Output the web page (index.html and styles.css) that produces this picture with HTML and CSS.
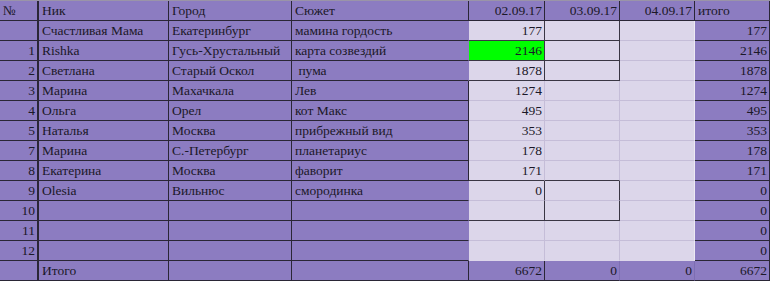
FILE: index.html
```html
<!DOCTYPE html>
<html lang="ru">
<head>
<meta charset="utf-8">
<title>Таблица</title>
<link rel="stylesheet" href="styles.css">
</head>
<body>
<div class="sheet">
  <!-- header -->
  <div class="c">№</div><div class="c">Ник</div><div class="c">Город</div><div class="c">Сюжет</div>
  <div class="c r">02.09.17</div><div class="c r">03.09.17</div><div class="c r">04.09.17</div><div class="c">итого</div>

  <div class="c r"></div><div class="c">Счастливая Мама</div><div class="c">Екатеринбург</div><div class="c sl">мамина гордость</div>
  <div class="c l r dr db">177</div><div class="c l dr db"></div><div class="c l le"></div><div class="c r">177</div>

  <div class="c r">1</div><div class="c">Rishka</div><div class="c">Гусь-Хрустальный</div><div class="c sl">карта созвездий</div>
  <div class="c g r dr db">2146</div><div class="c l dr db"></div><div class="c l le"></div><div class="c r">2146</div>

  <div class="c r">2</div><div class="c">Светлана</div><div class="c">Старый Оскол</div><div class="c sl pre"> пума</div>
  <div class="c l r dr db">1878</div><div class="c l dr db"></div><div class="c l le"></div><div class="c r">1878</div>

  <div class="c r">3</div><div class="c">Марина</div><div class="c">Махачкала</div><div class="c">Лев</div>
  <div class="c l r">1274</div><div class="c l"></div><div class="c l le"></div><div class="c r">1274</div>

  <div class="c r">4</div><div class="c">Ольга</div><div class="c">Орел</div><div class="c">кот Макс</div>
  <div class="c l r">495</div><div class="c l"></div><div class="c l le"></div><div class="c r">495</div>

  <div class="c r">5</div><div class="c">Наталья</div><div class="c">Москва</div><div class="c">прибрежный вид</div>
  <div class="c l r">353</div><div class="c l"></div><div class="c l le"></div><div class="c r">353</div>

  <div class="c r">7</div><div class="c">Марина</div><div class="c">С.-Петербург</div><div class="c">планетариус</div>
  <div class="c l r">178</div><div class="c l"></div><div class="c l le"></div><div class="c r">178</div>

  <div class="c r">8</div><div class="c">Екатерина</div><div class="c">Москва</div><div class="c">фаворит</div>
  <div class="c l r db">171</div><div class="c l db"></div><div class="c l le"></div><div class="c r">171</div>

  <div class="c r">9</div><div class="c">Olesia</div><div class="c">Вильнюс</div><div class="c sl">смородинка</div>
  <div class="c l r dr">0</div><div class="c l dr"></div><div class="c l le"></div><div class="c r">0</div>

  <div class="c r">10</div><div class="c"></div><div class="c"></div><div class="c sl"></div>
  <div class="c l dr db"></div><div class="c l dr db"></div><div class="c l le"></div><div class="c r">0</div>

  <div class="c r">11</div><div class="c"></div><div class="c"></div><div class="c sl"></div>
  <div class="c l"></div><div class="c l"></div><div class="c l le"></div><div class="c r">0</div>

  <div class="c r">12</div><div class="c"></div><div class="c"></div><div class="c sl"></div>
  <div class="c l nb"></div><div class="c l nb"></div><div class="c l le nb"></div><div class="c r">0</div>

  <div class="c"></div><div class="c">Итого</div><div class="c"></div><div class="c"></div>
  <div class="c r">6672</div><div class="c r fr">0</div><div class="c r fr">0</div><div class="c r">6672</div>
</div>
</body>
</html>
```

FILE: styles.css
```css
html, body {
  margin: 0;
  padding: 0;
  background: #8c7cc1;
}

.sheet {
  display: grid;
  grid-template-columns: 39px 130px 123px 177px 76px 75px 75px 75px;
  grid-auto-rows: 20px;
  width: 770px;
  border-top: 1px solid #9a94a8;
  font-family: "Liberation Serif", "Times New Roman", serif;
  font-size: 13.5px;
  color: #1b1828;
}

.c {
  box-sizing: border-box;
  background: #8c7cc1;
  border-right: 1px solid #2a2636;
  border-bottom: 1px solid #2a2636;
  padding: 0 3px 0 3px;
  line-height: 19px;
  white-space: nowrap;
  overflow: hidden;
}

.c:nth-child(8n+1) {
  border-right: 2px solid #2a2636;
}

.r {
  text-align: right;
  padding-right: 2px;
}

.pre {
  white-space: pre;
}

/* light data area */
.l {
  background: #dcd6ea;
  border-right-color: #c5bdd8;
  border-bottom-color: #c5bdd8;
}

.g {
  background: #00ff00;
}

.sl {
  border-right-color: #8c7cc1;
}

.le {
  border-right-color: #ece9f3;
}

.dr {
  border-right-color: #3a3644;
}

.db {
  border-bottom-color: #3a3644;
}

.nb {
  border-bottom-color: #dcd6ea;
}

.fr {
  border-right-color: #7d6eb3;
}
```
